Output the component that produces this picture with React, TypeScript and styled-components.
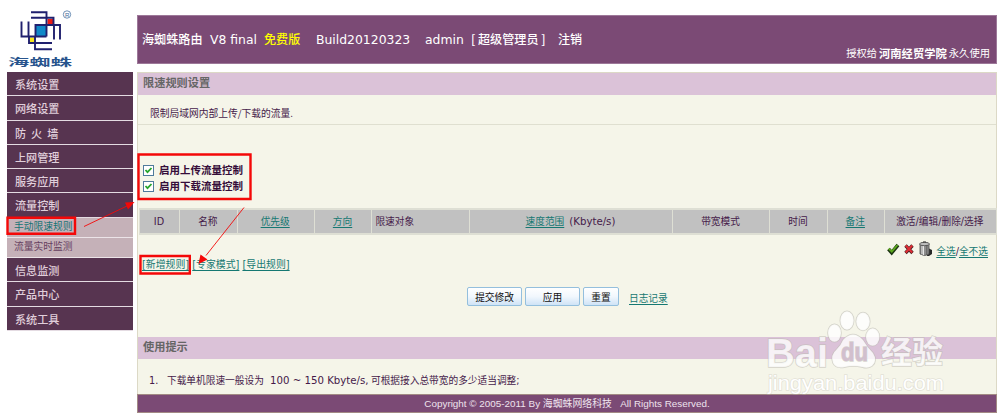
import React from "react";
import styled, { createGlobalStyle, css } from "styled-components";

const Global = createGlobalStyle`
  * { box-sizing: border-box; }
  body {
    margin: 0;
    background: #fff;
    color: #451a49;
    font-family: "DejaVu Sans", "Noto Sans CJK SC", sans-serif;
    font-size: 9.7px;
    overflow: hidden;
  }
`;

const Page = styled.div`
  position: relative;
  width: 1000px;
  height: 418px;
  display: flex;
`;

const Sidebar = styled.aside`
  width: 137px;
  padding-left: 7px;
`;

const LogoBox = styled.div`
  height: 72px;
  svg { display: block; }
`;

const Menu = styled.nav`
  width: 126px;
  display: flex;
  flex-direction: column;
`;

const MenuItem = styled.div`
  height: 24.25px;
  padding-left: 8px;
  border-bottom: 1.3px solid #e4dbe2;
  background: #573450;
  color: #e0cfdb;
  font: 500 11.1px/24px "Noto Sans CJK SC", sans-serif;
  white-space: pre;
`;

const SubItem = styled.div<{ $active?: boolean }>`
  height: 20.25px;
  padding-left: 7px;
  border-bottom: 1px solid #ece4e8;
  background: #c5b1b8;
  color: ${(p) => (p.$active ? "#147474" : "#654060")};
  font: 9.75px/17px "Noto Sans CJK SC", sans-serif;
`;

const Main = styled.main`
  width: 860px;
  padding-top: 15px;
`;

const Header = styled.header`
  height: 49px;
  display: flex;
  justify-content: space-between;
  padding: 0 6px 0 4px;
  background: #7b4a75;
  border: 1px solid #9d7899;
  color: #fff;
  white-space: nowrap;
`;

const Title = styled.div`
  display: flex;
  font-size: 12.4px;
  line-height: 47px;
`;

const Segment = styled.span<{ $w: number; $cjk?: boolean; $color?: string }>`
  width: ${(p) => p.$w}px;
  color: ${(p) => p.$color || "inherit"};
  ${(p) => p.$cjk && css`
    font-family: "Noto Sans CJK SC", sans-serif;
    font-weight: 500;
    font-size: 12.1px;
    line-height: 46px;
  `}
`;

const License = styled.div`
  align-self: flex-end;
  display: flex;
  gap: 2px;
  font: 10.3px/20px "Noto Sans CJK SC", sans-serif;
  b { font-size: 11.3px; }
`;

const Panel = styled.section`
  margin-top: 8px;
  height: 341px;
  display: flex;
  flex-direction: column;
  border: 1px solid #dcd9c6;
  background: #f5f5e9;
`;

const Bar = styled.h2`
  margin: 0;
  height: 22px;
  padding-left: 5px;
  background: #dbc2d8;
  color: #666;
  font: 700 11.2px/19px "Noto Sans CJK SC", sans-serif;
`;

const Description = styled.p`
  margin: 0;
  height: 30px;
  padding: 2px 0 0 12px;
  border-bottom: 1px solid #dfdfd0;
  font: 9.75px/32px "Noto Sans CJK SC", sans-serif;
`;

const Options = styled.div`
  height: 83px;
  padding: 37px 0 0 5px;
`;

const Option = styled.label`
  height: 16px;
  display: flex;
  align-items: center;
  gap: 5px;
  color: #350d3a;
  font: 700 10.5px/16px "Noto Sans CJK SC", sans-serif;
`;

const Check = styled.span`
  width: 11px;
  height: 11px;
  border: 1px solid #4f7b9c;
  background: #fff;
  svg { display: block; }
`;

const Table = styled.div`
  height: 27px;
  width: 858px;
  margin-left: 1px;
  padding: 2px 2px 2px 1px;
  display: grid;
  grid-template-columns: 39px 56.5px 76px 56.5px 96.5px 202px 96px 56.5px 56px 111px;
  column-gap: 1.1px;
  background: #dedfd4;
`;

const Cell = styled.div<{ $left?: boolean }>`
  display: flex;
  align-items: center;
  justify-content: ${(p) => (p.$left ? "flex-start" : "center")};
  padding: 1px 1px 0 ${(p) => (p.$left ? 3 : 0)}px;
  background: #c1c1c1;
  line-height: 20px;
  white-space: pre;
`;

const Unit = styled.span`
  margin-left: 5px;
  font-size: 10.2px;
`;

const Link = styled.span`
  color: #157872;
  line-height: 12px;
  text-decoration: underline;
  text-decoration-thickness: 1px;
  text-underline-offset: 1.5px;
`;

const Tools = styled.div`
  height: 22px;
  display: flex;
  justify-content: flex-end;
  align-items: flex-start;
  padding: 6px 8px 0 0;
  white-space: nowrap;
  svg { margin-right: 3px; }
`;

const SelectLinks = styled.span`
  line-height: 12px;
  padding-top: 5px;
`;

const RuleLinks = styled.div`
  height: 30px;
  display: flex;
  gap: 3px;
  padding: 2px 0 0 4px;
  font-size: 9.9px;
`;

const Buttons = styled.div`
  height: 50px;
  display: flex;
  gap: 3px;
  padding-left: 329px;
`;

const Button = styled.button<{ $w: number }>`
  width: ${(p) => p.$w}px;
  height: 19px;
  padding: 0;
  border: 1px solid #94bfdd;
  border-radius: 2px;
  background: linear-gradient(#fff, #f1f7fd 50%, #cfe3f6);
  color: #111;
  font: 9.7px/16px "Noto Sans CJK SC", sans-serif;
`;

const LogLink = styled(Link)`
  margin: 6px 0 0 7px;
`;

const Tip = styled.div`
  height: 35px;
  display: flex;
  padding: 12px 0 0 11px;
  line-height: 20px;
  white-space: pre;
`;

const Range = styled.span`
  width: 101px;
  font-size: 10.2px;
`;

const Footer = styled.footer`
  height: 19px;
  margin: 0 -1px -1px;
  display: flex;
  justify-content: center;
  background: #7b4a75;
  border: 1px solid #a28a84;
  color: #eee3ed;
  font: 9.9px/17px "Liberation Sans", "Noto Sans CJK SC", sans-serif;
  white-space: pre;
`;

const Overlay = styled.svg`
  position: absolute;
  left: 0;
  top: 0;
  pointer-events: none;
`;

const Logo = () => (
  <svg width="70" height="72" viewBox="7 0 70 72">
    <path d="M36 26h10v10H36z" fill="#1089c8" />
    <path d="M47.500 19h6v5h-6z" fill="#e91b16" />
    <path d="M30 37.500h4.500V42H30z" fill="#f7e51b" />
    <g fill="none" stroke="#20206e" strokeWidth="1.900">
      <path d="M31 12.200h15.500V36.500M31 17.700h22.500v7.300M35.500 36V25h24.500v14.500M54 25v14.500" />
      <path d="M21.500 21.500v15h25M28.500 21.500v15M29 36.500v6.500h23M35 37v12.200h17" />
    </g>
    <circle cx="67" cy="14.500" r="3.700" fill="none" stroke="#4d76a5" strokeWidth=".8" />
    <text x="64.900" y="16.700" fontSize="6" fontFamily="Liberation Sans" fill="#3b6698">R</text>
    <text x="8" y="65.500" fontSize="10" fontWeight="700" fontFamily="Noto Sans CJK SC" fill="#28548d" textLength="64" lengthAdjust="spacingAndGlyphs">海蜘蛛</text>
  </svg>
);

const Tick = () => (
  <Check>
    <svg width="9" height="9" viewBox="0 0 9 9">
      <path d="M1.500 4l2 2.200L7.500 2" fill="none" stroke="#25a52b" strokeWidth="1.8" />
    </svg>
  </Check>
);

const ToolIcons = () => (
  <svg width="46" height="17" viewBox="0 0 46 17">
    <path d="M1.500 8l3.200 3.700L11 4" fill="none" stroke="#1c3411" strokeWidth="3.600" />
    <path d="M1.800 7.600l3 3L10.500 4" fill="none" stroke="#5ca91e" strokeWidth="1.900" />
    <path d="M18.500 4.500l7 7.500M25.500 4.500l-7 7.500" stroke="#492020" strokeWidth="3.300" />
    <path d="M18.700 4.500l6.500 7M25.200 4.500l-6.500 7" stroke="#e12d35" strokeWidth="2" />
    <path d="M41 7l4 2v4l-3 2h-2z" fill="#292929" />
    <path d="M33 3h9v10q-4 3-9 0z" fill="#8d8d8d" stroke="#4d4d4d" strokeWidth=".8" />
    <path d="M35 4v9.500M36.500 4v10" stroke="#e7e7e7" />
    <path d="M39.800 4v10" stroke="#5e5e5e" />
    <ellipse cx="37.500" cy="3" rx="5" ry="1.700" fill="#bcbcbc" stroke="#444" strokeWidth=".8" />
    <path d="M36 1h3" stroke="#333" />
  </svg>
);

const Watermark = () => (
  <g fill="#fff" fillOpacity=".8" stroke="#bdbab2" strokeOpacity=".6" strokeWidth="1.500" paintOrder="stroke" fontFamily="Liberation Sans, Noto Sans CJK SC, sans-serif">
    <text x="766" y="367" fontSize="40" fontWeight="700" textLength="62" lengthAdjust="spacingAndGlyphs">Bai</text>
    <ellipse cx="834.500" cy="333" rx="6.500" ry="8.800" />
    <ellipse cx="847" cy="320.500" rx="6.700" ry="9.300" />
    <ellipse cx="863" cy="321.500" rx="6.800" ry="9" />
    <ellipse cx="872.700" cy="337" rx="6.700" ry="8.700" />
    <path d="M843 340q10-11 20 0q4 7 10 13q5 8-1 13q-4 3-10 1q-9-2-17 0q-9 2-12-4q-3-8 4-14q4-4 6-9z" />
    <text x="841" y="361" fontSize="25" fontWeight="700" fill="#d2bfce" fillOpacity="1" textLength="27" lengthAdjust="spacingAndGlyphs">du</text>
    <text x="881" y="363" fontSize="31" fontWeight="700" fontFamily="Noto Sans CJK SC" textLength="62" lengthAdjust="spacingAndGlyphs">经验</text>
    <text x="768" y="390" fontSize="21" fillOpacity="1" strokeOpacity=".35" textLength="176" lengthAdjust="spacingAndGlyphs">jingyan.baidu.com</text>
  </g>
);

export default function App() {
  return (
    <Page>
      <Global />
      <Sidebar>
        <LogoBox><Logo /></LogoBox>
        <Menu>
          <MenuItem>系统设置</MenuItem>
          <MenuItem>网络设置</MenuItem>
          <MenuItem>{"防  火  墙"}</MenuItem>
          <MenuItem>上网管理</MenuItem>
          <MenuItem>服务应用</MenuItem>
          <MenuItem>流量控制</MenuItem>
          <SubItem $active>手动限速规则</SubItem>
          <SubItem>流量实时监测</SubItem>
          <MenuItem>信息监测</MenuItem>
          <MenuItem>产品中心</MenuItem>
          <MenuItem>系统工具</MenuItem>
        </Menu>
      </Sidebar>
      <Main>
        <Header>
          <Title>
            <Segment $w={68} $cjk>海蜘蛛路由</Segment>
            <Segment $w={54}>V8 final</Segment>
            <Segment $w={52} $cjk $color="#ffff00">免费版</Segment>
            <Segment $w={109}>Build20120323</Segment>
            <Segment $w={46}>admin</Segment>
            <Segment $w={87} $cjk>[ 超级管理员 ]</Segment>
            <Segment $w={30} $cjk>注销</Segment>
          </Title>
          <License>授权给<b>河南经贸学院</b>永久使用</License>
        </Header>
        <Panel>
          <Bar>限速规则设置</Bar>
          <Description>限制局域网内部上传/下载的流量.</Description>
          <Options>
            <Option><Tick />启用上传流量控制</Option>
            <Option><Tick />启用下载流量控制</Option>
          </Options>
          <Table>
            <Cell>ID</Cell>
            <Cell>名称</Cell>
            <Cell><Link>优先级</Link></Cell>
            <Cell><Link>方向</Link></Cell>
            <Cell $left>限速对象</Cell>
            <Cell><Link>速度范围</Link><Unit>(Kbyte/s)</Unit></Cell>
            <Cell>带宽模式</Cell>
            <Cell>时间</Cell>
            <Cell><Link>备注</Link></Cell>
            <Cell>激活/编辑/删除/选择</Cell>
          </Table>
          <Tools>
            <ToolIcons />
            <SelectLinks><Link>全选</Link>/<Link>全不选</Link></SelectLinks>
          </Tools>
          <RuleLinks>
            <Link>[新增规则]</Link>
            <Link>[专家模式]</Link>
            <Link>[导出规则]</Link>
          </RuleLinks>
          <Buttons>
            <Button $w={55}>提交修改</Button>
            <Button $w={55}>应用</Button>
            <Button $w={36}>重置</Button>
            <LogLink>日志记录</LogLink>
          </Buttons>
          <Bar>使用提示</Bar>
          <Tip>
            <Segment $w={18}>1.</Segment>
            <Segment $w={103}>下载单机限速一般设为</Segment>
            <Range>100 ~ 150 Kbyte/s,</Range>
            <Segment $w={160}>可根据接入总带宽的多少适当调整;</Segment>
          </Tip>
          <Footer>{"Copyright © 2005-2011 By 海蜘蛛网络科技   All Rights Reserved."}</Footer>
        </Panel>
      </Main>
      <Overlay width="1000" height="418">
        <g fill="none" stroke="#f40808" strokeWidth="2.400">
          <path d="M7.500 217.800h67.500v16H7.500zM138.500 154.500h112v44.500h-112zM140.500 256h49.300v17.500h-49.300z" />
          <path d="M84 226.500l44-21M244 207.500l-38 48" strokeWidth=".9" />
        </g>
        <path d="M134.500 202l-6.500 7.500-3-7zM198.500 264l2-9.500 7 5z" fill="#f40808" />
        <Watermark />
      </Overlay>
    </Page>
  );
}
